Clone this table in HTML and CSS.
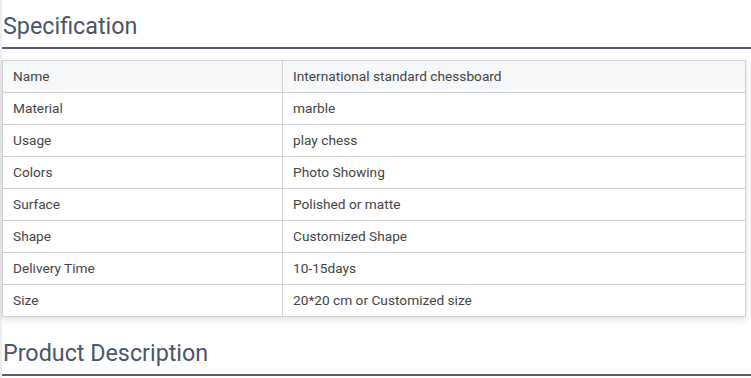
FILE: index.html
```html
<!DOCTYPE html>
<html>
<head>
<meta charset="utf-8">
<link rel="stylesheet" href="styles.css">
</head>
<body>
<div class="page">
  <h2 class="title">Specification</h2>
  <div class="spec-wrap">
    <table class="spec">
      <tr class="head"><td>Name</td><td>International standard chessboard</td></tr>
      <tr><td>Material</td><td>marble</td></tr>
      <tr><td>Usage</td><td>play chess</td></tr>
      <tr><td>Colors</td><td>Photo Showing</td></tr>
      <tr><td>Surface</td><td>Polished or matte</td></tr>
      <tr><td>Shape</td><td>Customized Shape</td></tr>
      <tr><td>Delivery Time</td><td>10-15days</td></tr>
      <tr><td>Size</td><td>20*20 cm or Customized size</td></tr>
    </table>
  </div>
  <h2 class="title second">Product Description</h2>
</div>
</body>
</html>
```
FILE: styles.css
```css
html, body {
  margin: 0;
  padding: 0;
  background: #fff;
}
body {
  font-family: Roboto, "Liberation Sans", sans-serif;
}
.page {
  border-left: 2px solid #eceef1;
  min-height: 378px;
  box-sizing: border-box;
}
.title {
  margin: 0;
  font-weight: 400;
  font-size: 23.3px;
  line-height: 28px;
  color: #4b5567;
  padding: 12px 0 7px 1px;
  border-bottom: 2px solid #545e6d;
}
.spec-wrap {
  margin: 11px 5px 0 0;
  box-shadow: 0 3px 8px rgba(0,0,0,0.12);
}
.spec {
  width: 100%;
  border-collapse: collapse;
  font-size: 13.7px;
  color: #444;
}
.spec td {
  border: 1px solid #d2d2d2;
  height: 32px;
  padding: 0 10px;
  box-sizing: border-box;
  line-height: 15px;
}
.spec td:first-child {
  width: 280px;
}
.spec .head td {
  background: #f6f7f9;
}
.second {
  margin-top: 10px;
}
```
